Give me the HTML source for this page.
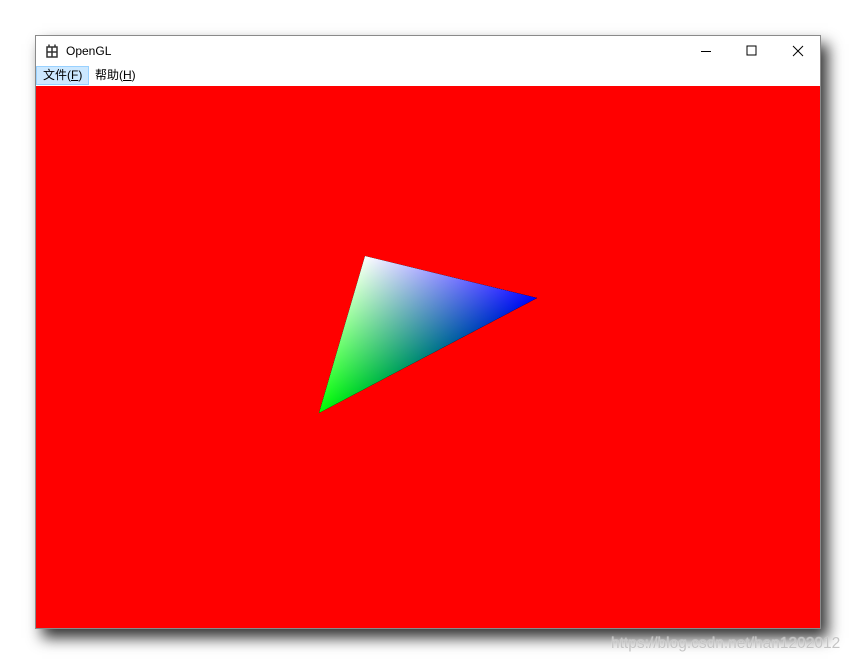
<!DOCTYPE html>
<html><head><style>
body{margin:0;width:856px;height:663px;background:#fff;position:relative;overflow:hidden;font-family:"Segoe UI","Liberation Sans","Noto Sans CJK SC",sans-serif}
.win{position:absolute;left:35px;top:35px;width:784px;height:592px;border:1px solid #8a8a8a;background:#fff;box-shadow:7px 9px 14px rgba(0,0,0,.8)}
.title{position:absolute;left:0;top:0;width:784px;height:30px;font-size:12px}
.title .t{position:absolute;left:30px;top:8px;color:#000}
.menu{position:absolute;left:0;top:30px;height:20px;width:784px;font-size:12px}
.m{position:absolute;top:0;height:19px;line-height:19px;padding:0 6px}
.canvas{position:absolute;left:0;top:50px;width:784px;height:542px;background:#f00}
.wm{position:absolute;left:611px;top:635px;font-size:15.5px;color:#c4c4c4;font-family:"Liberation Sans",sans-serif;text-shadow:0 0 1px rgba(255,255,255,.8);z-index:5}
</style></head><body>
<div class="win">
 <div class="title">
  <svg style="position:absolute;left:10px;top:8px" width="12" height="14" viewBox="0 0 12 14"><rect x="1" y="3" width="10" height="10" fill="none" stroke="#333" stroke-width="1.5"/><line x1="1" y1="8" x2="11" y2="8" stroke="#333" stroke-width="1.5"/><line x1="6" y1="3" x2="6" y2="13" stroke="#333" stroke-width="1.5"/><line x1="3" y1="0.5" x2="3" y2="3" stroke="#333" stroke-width="1.5"/><line x1="9" y1="0.5" x2="9" y2="3" stroke="#333" stroke-width="1.5"/></svg>
  <span class="t">OpenGL</span>
  <svg style="position:absolute;left:660px;top:9px" width="120" height="12"><line x1="5" y1="6.5" x2="15" y2="6.5" stroke="#000"/><rect x="710" y="1" width="9" height="9" fill="none" stroke="#000" transform="translate(-659,0)"/><line x1="97" y1="1" x2="107" y2="11" stroke="#000"/><line x1="107" y1="1" x2="97" y2="11" stroke="#000"/></svg>
 </div>
 <div class="menu">
  <div class="m" style="left:0;background:#cce8ff;border:1px solid #99d1ff;height:17px;line-height:17px">文件(<u>F</u>)</div>
  <div class="m" style="left:53px">帮助(<u>H</u>)</div>
 </div>
 <div class="canvas">
  <svg width="784" height="542" viewBox="36 86 784 542" style="position:absolute;left:0;top:0;isolation:isolate">
   <defs>
    <linearGradient id="ga" gradientUnits="userSpaceOnUse" x1="365" y1="256" x2="419.8" y2="359.8"><stop offset="0" stop-color="#fff"/><stop offset="1" stop-color="#000"/></linearGradient>
    <linearGradient id="gb" gradientUnits="userSpaceOnUse" x1="537" y1="298" x2="367.3" y2="248.3"><stop offset="0" stop-color="#00f"/><stop offset="1" stop-color="#000"/></linearGradient>
    <linearGradient id="gc" gradientUnits="userSpaceOnUse" x1="319" y1="413" x2="357.8" y2="254.2"><stop offset="0" stop-color="#0f0"/><stop offset="1" stop-color="#000"/></linearGradient>
   </defs>
   <g style="isolation:isolate">
    <polygon points="365,256 537,298 319,413" fill="#000"/>
    <polygon points="365,256 537,298 319,413" fill="url(#ga)" style="mix-blend-mode:plus-lighter"/>
    <polygon points="365,256 537,298 319,413" fill="url(#gb)" style="mix-blend-mode:plus-lighter"/>
    <polygon points="365,256 537,298 319,413" fill="url(#gc)" style="mix-blend-mode:plus-lighter"/>
   </g>
  </svg>
 </div>
</div>
<div class="wm">https://blog.csdn.net/han1202012</div>
</body></html>
